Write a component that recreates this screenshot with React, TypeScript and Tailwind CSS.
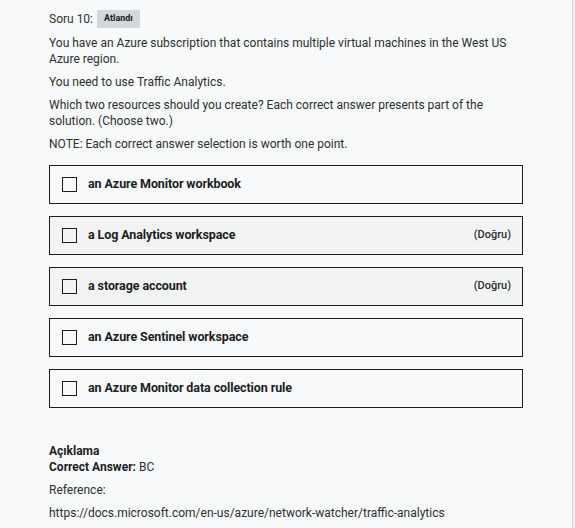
const options = [
  { text: "an Azure Monitor workbook", correct: false },
  { text: "a Log Analytics workspace", correct: true },
  { text: "a storage account", correct: true },
  { text: "an Azure Sentinel workspace", correct: false },
  { text: "an Azure Monitor data collection rule", correct: false },
];

function Option({ text, correct }: { text: string; correct: boolean }) {
  return (
    <div
      className={`flex items-center h-[39px] border border-[#1c1d1f] pl-[12px] pr-[11px] ${
        correct ? "bg-[#f2f4f3]" : ""
      }`}
    >
      <span className="w-[15px] h-[15px] border border-[#1c1d1f] shrink-0" />
      <span className="ml-[11px] font-bold text-[12.5px] text-[#1c1d1f] tracking-[-0.1px]">
        {text}
      </span>
      {correct && (
        <span className="ml-auto text-[11px] font-medium text-[#2d2f31]">(Doğru)</span>
      )}
    </div>
  );
}

export default function App() {
  return (
    <div className="w-[575px] h-[528px] flex bg-[#f7f9fa] font-['Roboto',sans-serif] text-[#2d2f31] overflow-hidden">
      <div className="flex-1 pl-[49px] pr-[49px] pt-[10px]">
        <div className="flex items-center text-[12px] h-[18px]">
          <span>Soru 10:</span>
          <span className="ml-[4px] bg-[#d1d7dc] px-[7px] h-[18px] flex items-center text-[9px] font-bold text-[#1c1d1f]">
            Atlandı
          </span>
        </div>
        <div className="text-[12px] leading-[16px] mt-[7px] space-y-[7px]">
          <p>You have an Azure subscription that contains multiple virtual machines in the West US Azure region.</p>
          <p>You need to use Traffic Analytics.</p>
          <p>Which two resources should you create? Each correct answer presents part of the solution. (Choose two.)</p>
          <p>NOTE: Each correct answer selection is worth one point.</p>
        </div>
        <div className="mt-[13px] flex flex-col gap-[12px]">
          {options.map((o) => (
            <Option key={o.text} {...o} />
          ))}
        </div>
        <div className="mt-[35px] text-[12px] leading-[16px]">
          <div className="font-bold text-[#1c1d1f]">Açıklama</div>
          <div>
            <span className="font-bold text-[#1c1d1f]">Correct Answer:</span> BC
          </div>
          <p className="mt-[7px]">Reference:</p>
          <p className="mt-[7px]">https://docs.microsoft.com/en-us/azure/network-watcher/traffic-analytics</p>
        </div>
      </div>
      <div className="w-[3px] border-l border-[#d4d6d8] bg-[#eef0f1]" />
    </div>
  );
}
